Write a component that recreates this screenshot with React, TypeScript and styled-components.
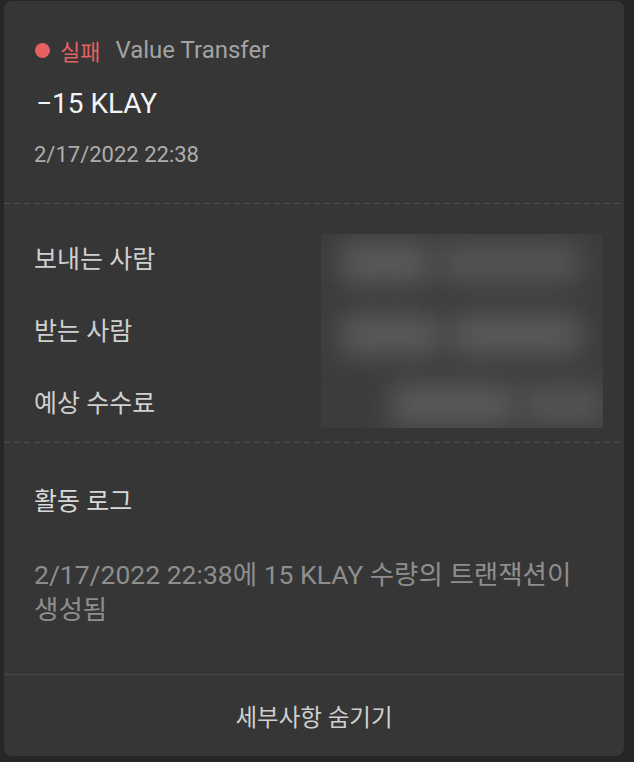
import styled, { createGlobalStyle } from "styled-components";

const GlobalStyle = createGlobalStyle`
  html, body {
    margin: 0;
    padding: 0;
    background: #262626;
    font-family: Roboto, "Noto Sans CJK KR", sans-serif;
  }
`;

const rows = ["보내는 사람", "받는 사람", "예상 수수료"];

export default function App() {
  return (
    <>
      <GlobalStyle />
      <Page>
        <Card>
          <Summary>
            <StatusLine>
              <Dot />
              <Status>실패</Status>
              <Kind>Value Transfer</Kind>
            </StatusLine>
            <Amount>−15 KLAY</Amount>
            <DateText>2/17/2022 22:38</DateText>
          </Summary>
          <Dashed />
          <Details>
            {rows.map((label) => (
              <Label key={label}>{label}</Label>
            ))}
            <Redacted>
              <Blob $top={8} $left={20} $width={90} $light />
              <Blob $top={8} $left={118} $width={140} />
              <Blob $top={80} $left={20} $width={100} $light />
              <Blob $top={80} $left={130} $width={130} $light />
              <Blob $top={150} $left={70} $width={125} $light />
              <Blob $top={150} $left={200} $width={85} />
            </Redacted>
          </Details>
          <Dashed />
          <Log>
            <LogTitle>활동 로그</LogTitle>
            <LogText>2/17/2022 22:38에 15 KLAY 수량의 트랜잭션이 생성됨</LogText>
          </Log>
          <Footer>
            <HideButton>세부사항 숨기기</HideButton>
          </Footer>
        </Card>
      </Page>
    </>
  );
}

const Page = styled.div`
  padding: 1px 10px 6px 4px;
`;

const Card = styled.div`
  width: 620px;
  height: 755px;
  background: #363636;
  border-radius: 8px;
  display: flex;
  flex-direction: column;
`;

const Summary = styled.div`
  padding: 35px 30px 36px 30px;
  display: flex;
  flex-direction: column;
`;

const StatusLine = styled.div`
  display: flex;
  align-items: center;
  height: 28px;
  font-size: 24px;
`;

const Dot = styled.span`
  width: 15px;
  height: 15px;
  border-radius: 50%;
  background: #e86060;
  margin: 0 10px 0 1px;
`;

const Status = styled.span`
  color: #e06262;
  font-size: 22px;
  margin-right: 15px;
`;

const Kind = styled.span`
  color: #a3a3a3;
`;

const Amount = styled.div`
  margin-top: 24px;
  font-size: 28px;
  font-weight: 400;
  line-height: 32px;
  color: #f4f4f4;
  padding-left: 2px;
`;

const DateText = styled.div`
  margin-top: 23px;
  font-size: 22px;
  line-height: 24px;
  color: #adadad;
`;

const Dashed = styled.div`
  height: 1px;
  background: repeating-linear-gradient(
    to right,
    #4e4e4e 0,
    #4e4e4e 6px,
    transparent 6px,
    transparent 10px
  );
`;

const Details = styled.div`
  display: grid;
  grid-template-columns: 1fr 282px;
  grid-template-rows: repeat(3, 72px);
  padding: 17px 21px 5px 30px;
`;

const Label = styled.div`
  grid-column: 1;
  align-self: center;
  font-size: 25px;
  color: #d0d0d0;
`;

const Redacted = styled.div`
  grid-column: 2;
  grid-row: 1 / 4;
  margin: 13px 0 9px;
  position: relative;
  overflow: hidden;
  background: #3c3c3c;
`;

const Blob = styled.div<{ $top: number; $left: number; $width: number; $light?: boolean }>`
  position: absolute;
  top: ${({ $top }) => $top}px;
  left: ${({ $left }) => $left}px;
  width: ${({ $width }) => $width}px;
  height: 42px;
  background: ${({ $light }) => ($light ? "#5a5a5a" : "#545454")};
  filter: blur(14px);
`;

const Log = styled.div`
  padding: 45px 40px 47px 30px;
  border-bottom: 1px solid #474747;
`;

const LogTitle = styled.div`
  font-size: 25px;
  line-height: 28px;
  color: #d8d8d8;
`;

const LogText = styled.div`
  margin-top: 41px;
  font-size: 26.5px;
  line-height: 35px;
  color: #8e8e8e;
`;

const Footer = styled.div`
  flex: 1;
  display: flex;
  align-items: center;
  justify-content: center;
`;

const HideButton = styled.button`
  background: none;
  border: 0;
  padding: 0;
  font-family: inherit;
  font-size: 23.5px;
  color: #cfcfcf;
  cursor: pointer;
`;
